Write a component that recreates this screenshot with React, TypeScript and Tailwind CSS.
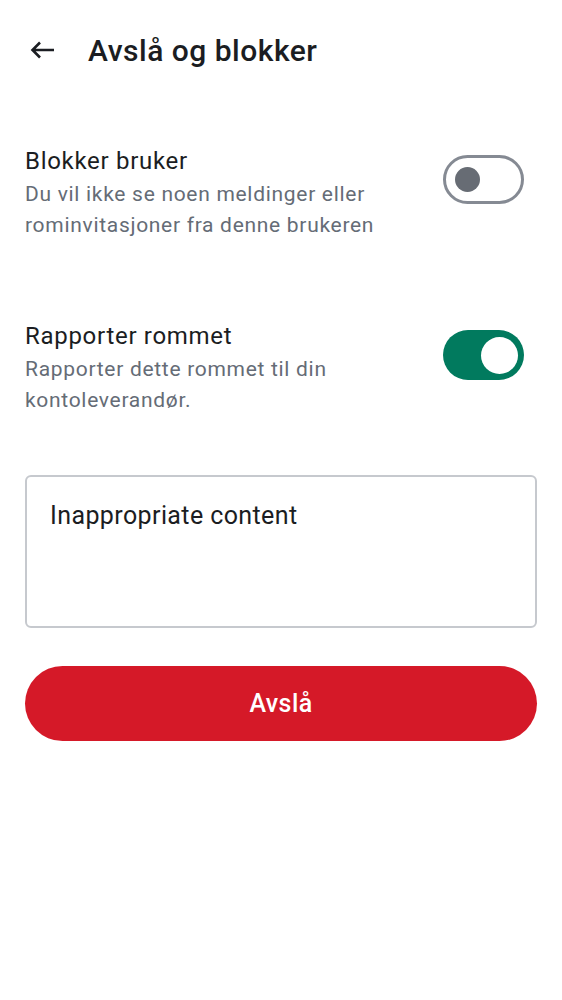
import { useState } from 'react';

const Toggle = ({ on, onChange }: { on: boolean; onChange: () => void }) => (
  <button
    onClick={onChange}
    className={
      on
        ? 'mt-[9px] flex h-[50px] w-[81px] shrink-0 items-center justify-end rounded-full bg-[#017a5e] px-[6px]'
        : 'mt-[9px] flex h-[49px] w-[81px] shrink-0 items-center justify-start rounded-full border-[3px] border-[#858a93] bg-white px-[9px]'
    }
  >
    <span
      className={
        on
          ? 'block h-[37px] w-[37px] rounded-full bg-white'
          : 'block h-[25px] w-[25px] rounded-full bg-[#676c74]'
      }
    />
  </button>
);

const SettingRow = ({
  title,
  desc,
  on,
  onChange,
}: {
  title: string;
  desc: string;
  on: boolean;
  onChange: () => void;
}) => (
  <div className="flex items-start justify-between gap-6">
    <div className="flex flex-col">
      <span className="text-[24px] leading-[30px] tracking-[0.7px] text-[#1b1d22]">{title}</span>
      <span className="mt-[3px] text-[21px] leading-[31px] tracking-[0.7px] text-[#656c76]">{desc}</span>
    </div>
    <Toggle on={on} onChange={onChange} />
  </div>
);

export default function App() {
  const [block, setBlock] = useState(false);
  const [report, setReport] = useState(true);
  const [reason, setReason] = useState('Inappropriate content');

  return (
    <div className="min-h-[1000px] w-full bg-white font-['Roboto',sans-serif]">
      {/* header */}
      <div className="flex h-[100px] items-center pl-[30px]">
        <svg width="25" height="18" viewBox="0 0 25 18" className="text-[#1b1d22]" fill="none">
          <path d="M24 9H2.5M10 1.5L2.5 9L10 16.5" stroke="currentColor" strokeWidth="2.6" />
        </svg>
        <h1 className="ml-[33px] text-[30px] font-medium tracking-[0.5px] text-[#1b1d22]">Avslå og blokker</h1>
      </div>

      <div className="flex flex-col px-[25px] pt-[46px]">
        <div className="pr-[13px]">
          <SettingRow
            title="Blokker bruker"
            desc="Du vil ikke se noen meldinger eller rominvitasjoner fra denne brukeren"
            on={block}
            onChange={() => setBlock(!block)}
          />
        </div>
        <div className="mt-[80px] pr-[13px]">
          <SettingRow
            title="Rapporter rommet"
            desc="Rapporter dette rommet til din kontoleverandør."
            on={report}
            onChange={() => setReport(!report)}
          />
        </div>

        <textarea
          value={reason}
          onChange={(e) => setReason(e.target.value)}
          className="mt-[59px] h-[153px] w-full resize-none rounded-[6px] border-2 border-[#c6c9ce] px-[23px] pt-[22px] text-[25px] leading-[34px] tracking-[0.4px] text-[#1b1d22] outline-none"
        />

        <button className="mt-[38px] flex h-[75px] w-full items-center justify-center rounded-full bg-[#d51928] text-[25px] font-medium tracking-[0.4px] text-white">
          Avslå
        </button>
      </div>
    </div>
  );
}
